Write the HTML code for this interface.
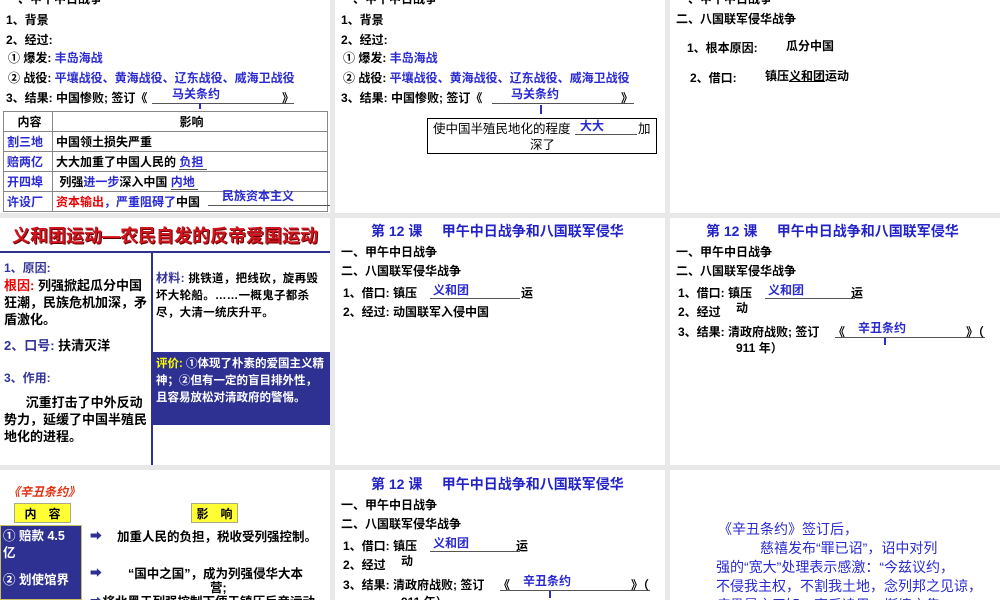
<!DOCTYPE html>
<html><head><meta charset="utf-8"><style>
*{margin:0;padding:0;box-sizing:border-box}
body{width:1000px;height:600px;background:#e8e8e8;position:relative;overflow:hidden;font-family:"Liberation Sans","Noto Sans CJK SC",sans-serif;font-size:12px;color:#000}
.s{position:absolute;background:#fff;overflow:hidden}
.t{position:absolute;white-space:nowrap;line-height:16px;font-weight:bold}
.b{color:#2a2ad0}
.u{position:absolute;border-bottom:1px solid #555;height:1px}
.ti{position:absolute;white-space:nowrap;color:#2323c8;font-weight:bold;font-size:14px;line-height:18px}
table{border-collapse:collapse}
td{border:1px solid #888;height:20px;padding-left:3px;font-weight:bold;font-size:12px;white-space:nowrap}
</style></head><body>

<!-- Row1 col1 -->
<div class="s" style="left:0;top:0;width:330px;height:213px">
<div class="t" style="left:6px;top:-9px">一、甲午中日战争</div>
<div class="t" style="left:6px;top:12px">1、背景</div>
<div class="t" style="left:6px;top:32px">2、经过:</div>
<div class="t" style="left:8px;top:50px">① 爆发: <span class="b">丰岛海战</span></div>
<div class="t" style="left:8px;top:70px">② 战役: <span class="b">平壤战役、黄海战役、辽东战役、威海卫战役</span></div>
<div class="t" style="left:6px;top:90px">3、结果: 中国惨败; 签订《</div>
<div class="u" style="left:152px;top:103px;width:142px"></div>
<div class="t b" style="left:172px;top:86px">马关条约</div>
<div class="t" style="left:282px;top:90px">》</div>
<div style="position:absolute;left:199px;top:103px;width:2px;height:6px;background:#2a2ad0"></div>
<table style="position:absolute;left:3px;top:111px;width:325px">
<tr><td style="width:49px;text-align:center">内容</td><td style="text-align:center">影响</td></tr>
<tr><td class="b">割三地</td><td>中国领土损失严重</td></tr>
<tr><td class="b">赔两亿</td><td>大大加重了中国人民的 <span class="b" style="border-bottom:1px solid #555">负担&nbsp;</span></td></tr>
<tr><td class="b">开四埠</td><td>&nbsp;列强<span class="b">进一步</span>深入中国 <span class="b" style="border-bottom:1px solid #555">内地&nbsp;</span></td></tr>
<tr><td class="b">许设厂</td><td><span style="color:#e00">资本输出</span><span class="b">，严重阻碍了</span>中国</td></tr>
</table>
<div class="t b" style="left:222px;top:188px">民族资本主义</div>
<div class="u" style="left:208px;top:205px;width:122px"></div>
</div>

<!-- Row1 col2 -->
<div class="s" style="left:335px;top:0;width:330px;height:213px">
<div class="t" style="left:6px;top:-9px">一、甲午中日战争</div>
<div class="t" style="left:6px;top:12px">1、背景</div>
<div class="t" style="left:6px;top:32px">2、经过:</div>
<div class="t" style="left:8px;top:50px">① 爆发: <span class="b">丰岛海战</span></div>
<div class="t" style="left:8px;top:70px">② 战役: <span class="b">平壤战役、黄海战役、辽东战役、威海卫战役</span></div>
<div class="t" style="left:6px;top:90px">3、结果: 中国惨败; 签订《</div>
<div class="u" style="left:157px;top:103px;width:142px"></div>
<div class="t b" style="left:176px;top:86px">马关条约</div>
<div class="t" style="left:286px;top:90px">》</div>
<div style="position:absolute;left:205px;top:105px;width:2px;height:9px;background:#2a2ad0"></div>
<div style="position:absolute;left:92px;top:118px;width:230px;height:36px;border:1.5px solid #000"></div>
<div class="t" style="left:98px;top:121px;font-weight:normal;font-size:12.5px">使中国半殖民地化的程度</div>
<div class="u" style="left:240px;top:134px;width:62px"></div>
<div class="t b" style="left:245px;top:118px">大大</div>
<div class="t" style="left:303px;top:121px;font-weight:normal;font-size:12.5px">加</div>
<div class="t" style="left:195px;top:137px;font-weight:normal;font-size:12.5px">深了</div>
</div>

<!-- Row1 col3 -->
<div class="s" style="left:670px;top:0;width:330px;height:213px">
<div class="t" style="left:6px;top:-9px">一、甲午中日战争</div>
<div class="t" style="left:6px;top:11px">二、八国联军侵华战争</div>
<div class="t" style="left:17px;top:40px">1、根本原因:</div>
<div class="t" style="left:116px;top:38px">瓜分中国</div>
<div class="t" style="left:20px;top:70px">2、借口:</div>
<div class="t" style="left:95px;top:68px">镇压<span style="text-decoration:underline">义和团</span>运动</div>
</div>

<!-- Row2 col1 -->
<div class="s" style="left:0;top:218px;width:330px;height:247px">
<div class="t" style="left:12px;top:6px;font-size:18px;line-height:24px;color:#d0141e;text-shadow:1px 1px 0 #600,-1px -1px 0 #fff">义和团运动—农民自发的反帝爱国运动</div>
<div style="position:absolute;left:0;top:33px;width:330px;height:2px;background:#2e3192"></div>
<div style="position:absolute;left:151px;top:35px;width:2px;height:212px;background:#2e3192"></div>
<div class="t" style="left:4px;top:42px;color:#333399">1、原因:</div>
<div class="t" style="left:4px;top:59px;line-height:17px;font-size:13px;white-space:normal;width:146px"><span style="color:#e00">根因:</span> 列强掀起瓜分中国狂潮，民族危机加深，矛盾激化。</div>
<div class="t" style="left:4px;top:120px;font-size:13px"><span style="color:#333399">2、口号:</span> 扶清灭洋</div>
<div class="t" style="left:4px;top:152px;color:#333399">3、作用:</div>
<div class="t" style="left:4px;top:176px;line-height:17px;font-size:13px;white-space:normal;width:144px">&nbsp;&nbsp;&nbsp;&nbsp;&nbsp;&nbsp;沉重打击了中外反动势力，延缓了中国半殖民地化的进程。</div>
<div class="t" style="left:156px;top:52px;line-height:17px;font-size:11.5px;letter-spacing:0.3px;white-space:normal;width:172px"><span style="color:#333399;font-size:12px">材料:</span> 挑铁道，把线砍，旋再毁坏大轮船。……一概鬼子都杀尽，大清一统庆升平。</div>
<div style="position:absolute;left:153px;top:134px;width:177px;height:73px;background:#2e3192"></div>
<div class="t" style="left:156px;top:138px;line-height:17px;font-size:11.5px;white-space:normal;width:172px;color:#fff"><span style="color:#ff0">评价:</span> ①体现了朴素的爱国主义精神；②但有一定的盲目排外性，且容易放松对清政府的警惕。</div>
</div>

<!-- Row2 col2 -->
<div class="s" style="left:335px;top:218px;width:330px;height:247px">
<div class="ti" style="left:36px;top:4px">第 12 课&nbsp;&nbsp;&nbsp;&nbsp; 甲午中日战争和八国联军侵华</div>
<div class="t" style="left:6px;top:26px">一、甲午中日战争</div>
<div class="t" style="left:6px;top:45px">二、八国联军侵华战争</div>
<div class="t" style="left:8px;top:67px">1、借口: 镇压</div>
<div class="u" style="left:95px;top:80px;width:90px"></div>
<div class="t b" style="left:98px;top:64px">义和团</div>
<div class="t" style="left:186px;top:67px">运</div>
<div class="t" style="left:8px;top:86px">2、经过: 动国联军入侵中国</div>
</div>

<!-- Row2 col3 -->
<div class="s" style="left:670px;top:218px;width:330px;height:247px">
<div class="ti" style="left:36px;top:4px">第 12 课&nbsp;&nbsp;&nbsp;&nbsp; 甲午中日战争和八国联军侵华</div>
<div class="t" style="left:6px;top:26px">一、甲午中日战争</div>
<div class="t" style="left:6px;top:45px">二、八国联军侵华战争</div>
<div class="t" style="left:8px;top:67px">1、借口: 镇压</div>
<div class="u" style="left:95px;top:80px;width:90px"></div>
<div class="t b" style="left:98px;top:64px">义和团</div>
<div class="t" style="left:181px;top:67px">运</div>
<div class="t" style="left:8px;top:86px">2、经过</div>
<div class="t" style="left:66px;top:82px">动</div>
<div class="t" style="left:8px;top:106px">3、结果: 清政府战败; 签订</div>
<div class="t" style="left:163px;top:106px">《</div>
<div class="u" style="left:165px;top:119px;width:150px"></div>
<div class="t b" style="left:188px;top:102px">辛丑条约</div>
<div class="t" style="left:296px;top:106px">》（</div>
<div style="position:absolute;left:214px;top:120px;width:2px;height:7px;background:#2a2ad0"></div>
<div class="t" style="left:66px;top:122px">911 年）</div>
</div>

<!-- Row3 col1 -->
<div class="s" style="left:0;top:470px;width:330px;height:130px">
<div class="t" style="left:8px;top:14px;color:#e03010;font-style:italic">《辛丑条约》</div>
<div class="t" style="left:14px;top:33px;width:57px;height:20px;line-height:20px;background:#ffff33;border:1px solid #aa8;text-align:center">内　容</div>
<div class="t" style="left:191px;top:33px;width:47px;height:20px;line-height:20px;background:#ffff33;border:1px solid #aa8;text-align:center">影　响</div>
<div style="position:absolute;left:0;top:55px;width:82px;height:75px;background:#2e3192;border:1px solid #c8c060"></div>
<div class="t" style="left:3px;top:58px;color:#fff;font-size:12.5px;line-height:17px;white-space:normal;width:76px">① 赔款 4.5 亿</div>
<div class="t" style="left:3px;top:102px;color:#fff;font-size:12.5px">② 划使馆界</div>
<div class="t" style="left:90px;top:58px;color:#2e3192">&#10145;</div>
<div class="t" style="left:117px;top:59px;font-size:12.5px">加重人民的负担，税收受列强控制。</div>
<div class="t" style="left:90px;top:95px;color:#2e3192">&#10145;</div>
<div class="t" style="left:128px;top:96px;font-size:12.5px;text-align:center">“国中之国”，成为列强侵华大本</div>
<div class="t" style="left:210px;top:110px;font-size:12.5px">营;</div>
<div class="t" style="left:90px;top:124px;font-size:12.5px"><span style="color:#2e3192">&#10145;</span>将北黑于列强控制下便于镇压反帝运动</div>
</div>

<!-- Row3 col2 -->
<div class="s" style="left:335px;top:470px;width:330px;height:130px">
<div class="ti" style="left:36px;top:5px">第 12 课&nbsp;&nbsp;&nbsp;&nbsp; 甲午中日战争和八国联军侵华</div>
<div class="t" style="left:6px;top:27px">一、甲午中日战争</div>
<div class="t" style="left:6px;top:46px">二、八国联军侵华战争</div>
<div class="t" style="left:8px;top:68px">1、借口: 镇压</div>
<div class="u" style="left:95px;top:81px;width:90px"></div>
<div class="t b" style="left:98px;top:65px">义和团</div>
<div class="t" style="left:181px;top:68px">运</div>
<div class="t" style="left:8px;top:87px">2、经过</div>
<div class="t" style="left:66px;top:83px">动</div>
<div class="t" style="left:8px;top:107px">3、结果: 清政府战败; 签订</div>
<div class="t" style="left:163px;top:107px">《</div>
<div class="u" style="left:165px;top:120px;width:150px"></div>
<div class="t b" style="left:188px;top:103px">辛丑条约</div>
<div class="t" style="left:296px;top:107px">》（</div>
<div style="position:absolute;left:214px;top:121px;width:2px;height:7px;background:#2a2ad0"></div>
<div class="t" style="left:66px;top:124px">911 年）</div>
</div>

<!-- Row3 col3 -->
<div class="s" style="left:670px;top:470px;width:330px;height:130px">
<div style="position:absolute;left:48px;top:50px;width:280px;color:#2a2ad0;font-size:14px;line-height:19px;white-space:nowrap">
<div>《辛丑条约》签订后，</div>
<div style="padding-left:42px">慈禧发布“罪已诏”，诏中对列</div>
<div style="margin-left:-2px">强的“宽大”处理表示感激：“今兹议约，</div>
<div style="margin-left:-2px">不侵我主权，不割我土地，念列邦之见谅，</div>
<div style="margin-left:-2px">疾愚暴之无知，事后追思，惭愤交集。”</div>
</div>
</div>

</body></html>
